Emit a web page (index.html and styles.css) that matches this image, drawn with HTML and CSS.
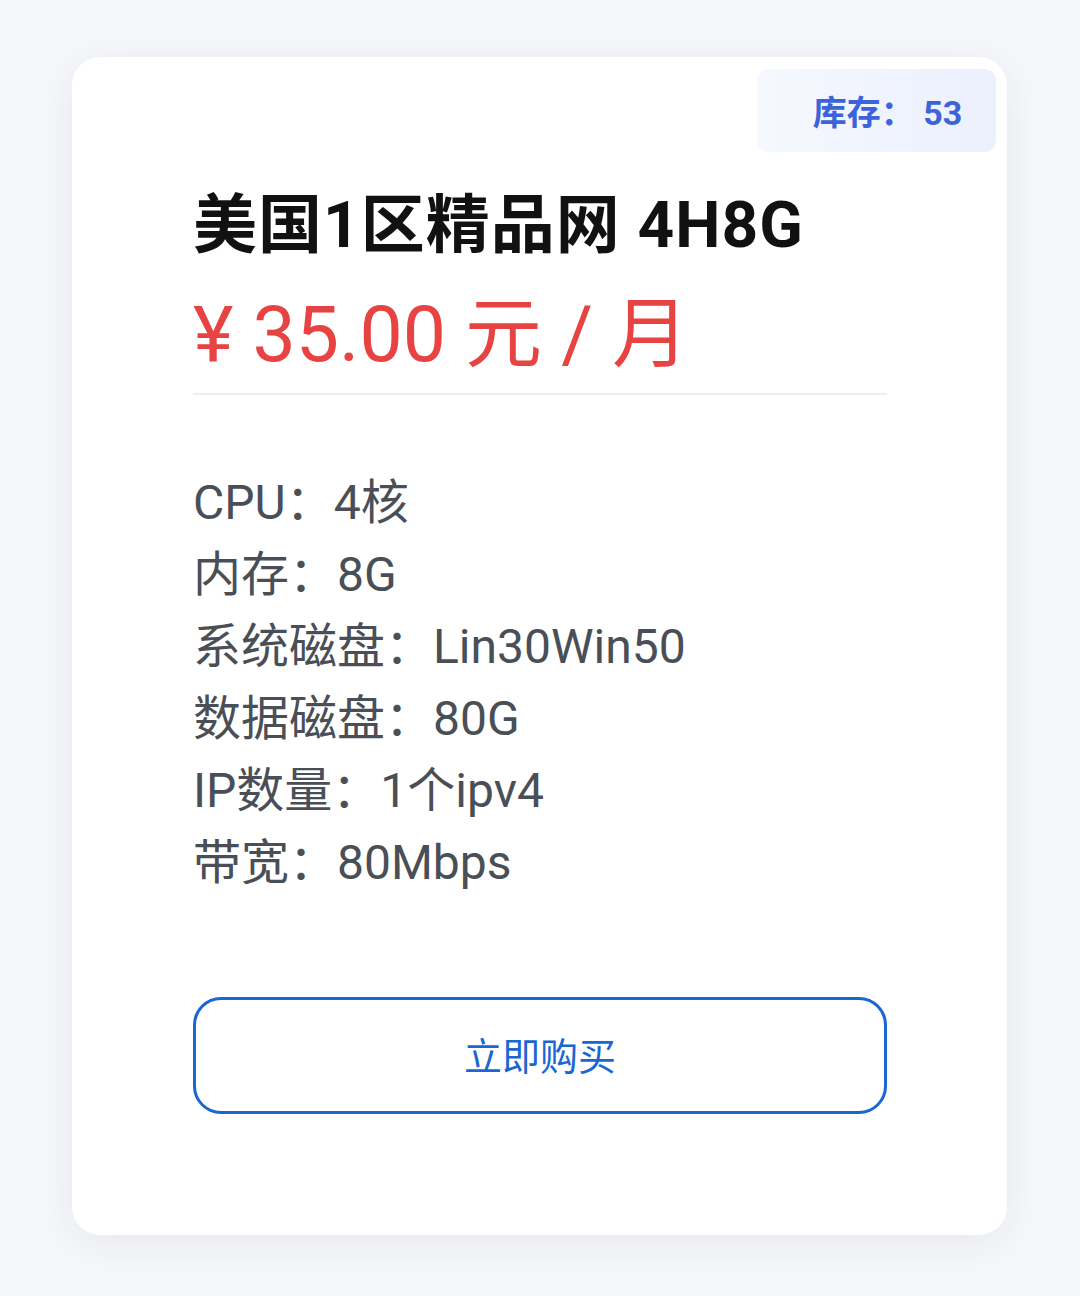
FILE: index.html
```html
<!DOCTYPE html>
<html lang="zh-CN">
<head>
<meta charset="utf-8">
<title>美国1区精品网 4H8G</title>
<link rel="stylesheet" href="styles.css">
</head>
<body>
<div class="page">
<div class="card">
  <div class="stock">库存：&nbsp;53</div>
  <h1 class="title">美国1区精品网 4H8G</h1>
  <div class="price">¥ 35.00 元 / 月</div>
  <ul class="specs">
    <li>CPU：4核</li>
    <li>内存：8G</li>
    <li>系统磁盘：Lin30Win50</li>
    <li>数据磁盘：80G</li>
    <li>IP数量：1个ipv4</li>
    <li>带宽：80Mbps</li>
  </ul>
  <button class="buy">立即购买</button>
</div>
</div>
</body>
</html>
```

FILE: styles.css
```css
html, body {
  margin: 0;
  padding: 0;
  background: #f6f7f9;
  font-family: Roboto, "Noto Sans CJK SC", sans-serif;
}
.page {
  box-sizing: border-box;
  min-height: 1296px;
  padding: 57px 0 40px 72px;
}
.card {
  position: relative;
  box-sizing: border-box;
  width: 935px;
  padding: 124px 120px 121px 121px;
  background: #ffffff;
  border-radius: 28px;
  box-shadow: 0 8px 40px rgba(30, 40, 80, 0.07);
}
.stock {
  position: absolute;
  top: 12px;
  right: 11px;
  width: 239px;
  height: 83px;
  box-sizing: border-box;
  border-radius: 12px;
  background: linear-gradient(90deg, #f6f8fe, #ebf0fd);
  color: #3d63d8;
  font-weight: 700;
  font-size: 34px;
  display: flex;
  align-items: center;
  justify-content: center;
  padding-left: 22px;
}
.title {
  margin: 0;
  font-size: 64px;
  line-height: 90px;
  font-weight: 700;
  letter-spacing: 1px;
  color: #111111;
}
.price {
  margin-top: 12px;
  font-size: 77px;
  line-height: 104px;
  color: #e84343;
  padding-bottom: 6px;
  border-bottom: 2px solid #eeeeee;
}
.specs {
  list-style: none;
  margin: 72px 0 0;
  padding: 0;
  font-size: 48px;
  line-height: 72px;
  color: #4a4f57;
}
.buy {
  display: block;
  width: 100%;
  height: 117px;
  margin-top: 98px;
  box-sizing: border-box;
  border: 3px solid #1a66d2;
  border-radius: 28px;
  background: #ffffff;
  color: #1a66d2;
  font-family: Roboto, "Noto Sans CJK SC", sans-serif;
  font-size: 38px;
  padding: 0 0 4px;
}
```
